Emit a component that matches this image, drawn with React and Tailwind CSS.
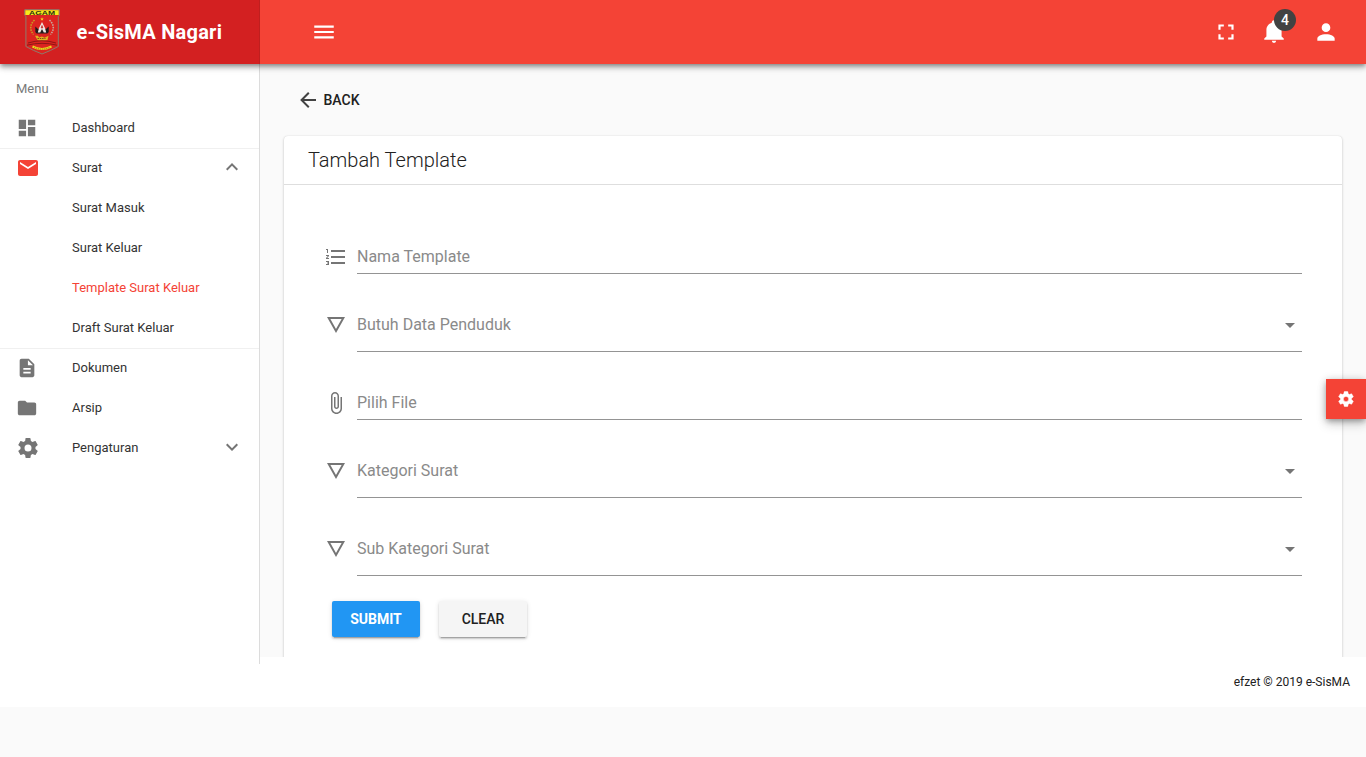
import React from "react";

const PATHS = {
  menu: "M3 6h18v2H3V6m0 5h18v2H3v-2m0 5h18v2H3v-2z",
  fullscreen: "M5 5h5v2H7v3H5V5m9 0h5v5h-2V7h-3V5m3 9h2v5h-5v-2h3v-3m-7 3v2H5v-5h2v3h3z",
  bell: "M21 19v1H3v-1l2-2v-6c0-3.1 2.03-5.83 5-6.71V4a2 2 0 0 1 4 0v.29c2.97.88 5 3.61 5 6.71v6l2 2m-7 2a2 2 0 0 1-4 0",
  person: "M12 4a4 4 0 1 1 0 8 4 4 0 0 1 0-8m0 10c4.42 0 8 1.79 8 4v2H4v-2c0-2.21 3.58-4 8-4z",
  dashboard: "M13 3v6h8V3h-8m0 18h8V11h-8v10M3 21h8v-6H3v6m0-8h8V3H3v10z",
  email: "M20 4H4c-1.1 0-1.99.9-1.99 2L2 18c0 1.1.9 2 2 2h16c1.1 0 2-.9 2-2V6c0-1.1-.9-2-2-2zm0 4l-8 5-8-5V6l8 5 8-5v2z",
  document: "M14 2H6c-1.1 0-1.99.9-1.99 2L4 20c0 1.1.89 2 1.99 2H18c1.1 0 2-.9 2-2V8l-6-6zm2 16H8v-2h8v2zm0-4H8v-2h8v2zm-3-5V3.5L18.5 9H13z",
  folder: "M10 4H4c-1.1 0-1.99.9-1.99 2L2 18c0 1.1.9 2 2 2h16c1.1 0 2-.9 2-2V8c0-1.1-.9-2-2-2h-8l-2-2z",
  settings: "M12 15.5A3.5 3.5 0 0 1 8.5 12 3.5 3.5 0 0 1 12 8.5a3.5 3.5 0 0 1 3.5 3.5 3.5 3.5 0 0 1-3.5 3.5m7.43-2.53c.04-.32.07-.64.07-.97 0-.33-.03-.66-.07-1l2.11-1.63c.19-.15.24-.42.12-.64l-2-3.46c-.12-.22-.39-.31-.61-.22l-2.49 1c-.52-.39-1.06-.73-1.69-.98l-.37-2.65A.506.506 0 0 0 14 2h-4c-.25 0-.46.18-.5.42l-.37 2.65c-.63.25-1.17.59-1.69.98l-2.49-1c-.22-.09-.49 0-.61.22l-2 3.46c-.13.22-.07.49.12.64L4.57 11c-.04.34-.07.67-.07 1 0 .33.03.65.07.97l-2.11 1.66c-.19.15-.25.42-.12.64l2 3.46c.12.22.39.3.61.22l2.49-1.01c.52.4 1.06.74 1.69.99l.37 2.65c.04.24.25.42.5.42h4c.25 0 .46-.18.5-.42l.37-2.65c.63-.26 1.17-.59 1.69-.99l2.49 1.01c.22.08.49 0 .61-.22l2-3.46c.12-.22.07-.49-.12-.64l-2.11-1.66z",
  up: "M7.41 15.41L12 10.83l4.59 4.58L18 14l-6-6-6 6z",
  down: "M7.41 8.59L12 13.17l4.59-4.58L18 10l-6 6-6-6z",
  back: "M20 11v2H8l5.5 5.5-1.42 1.42L4.16 12l7.92-7.92L13.5 5.5 8 11h12z",
  list: "M2 17h2v.5H3v1h1v.5H2v1h3v-4H2v1zm1-9h1V4H2v1h1v3zm-1 3h1.8L2 13.1v.9h3v-1H3.2L5 10.9V10H2v1zm5-6v2h14V5H7zm0 14h14v-2H7v2zm0-6h14v-2H7v2z",
  details: "M6.38 6h11.25L12 16 6.38 6M3 4l9 16 9-16H3z",
  clip: "M16.5 6v11.5c0 2.21-1.79 4-4 4s-4-1.79-4-4V5c0-1.38 1.12-2.5 2.5-2.5s2.5 1.12 2.5 2.5v10.5c0 .55-.45 1-1 1s-1-.45-1-1V6H10v9.5c0 1.38 1.12 2.5 2.5 2.5s2.5-1.12 2.5-2.5V5c0-2.21-1.79-4-4-4S7 2.79 7 5v12.5c0 3.04 2.46 5.5 5.5 5.5s5.5-2.46 5.5-5.5V6h-1.5z",
  caret: "M7 10l5 5 5-5H7z",
};

function Icon({ name, className = "size-6" }) {
  return (
    <svg viewBox="0 0 24 24" fill="currentColor" className={`shrink-0 ${className}`} aria-hidden="true">
      <path fillRule="evenodd" d={PATHS[name]} />
    </svg>
  );
}

function Logo() {
  return (
    <svg viewBox="0 0 36 46" className="h-[46px] w-9 shrink-0">
      <path d="M.7.7h34.6v5.6l-1 1v30.2Q27 41.5 18 45 9 41.5 1.9 37.5V7.3L.7 6.3z" fill="#dc2420" stroke="#8f7a6c" strokeWidth="1" />
      <path d="M1.3 1.2h33.4v4.9H1.3z" fill="#f4ea1c" />
      <text x="18" y="5.8" textAnchor="middle" textLength="26" lengthAdjust="spacingAndGlyphs" fontFamily="Liberation Sans, sans-serif" fontWeight="700" fontSize="6" fill="#2c2a12">AGAM</text>
      <path d="M10.500 11Q3.500 18 9.500 25.500" fill="none" stroke="#c99a22" strokeWidth="1.600" strokeDasharray="1.600 1" />
      <path d="M25.500 11Q32.500 18 26.500 25.500" fill="none" stroke="#c9a79c" strokeWidth="1.600" strokeDasharray="1.600 1" />
      <path d="M18 8.200l.5 1.200 1.300.1-1 .8.400 1.300-1.200-.7-1.200.7.400-1.300-1-.8 1.300-.1z" fill="#f0d020" />
      <path d="M11.300 17.500l2.700 2.500h8l2.700-2.500v5.500q-.7 1.500-2.200 1.500h-9q-1.500 0-2.200-1.500z" fill="#241c1c" />
      <path d="M18 13l3 6 1.200 4.500h-2.400L18 20l-1.800 3.500h-2.400L15 19z" fill="#f0e8e4" />
      <path d="M18 15.500l1.300 3-1.300 1.300-1.300-1.300z" fill="#c43c34" />
      <path d="M11 26.800h3l1 1.700 3-1 2.500 1.200 4-2-1 4.200q-6 1.600-10 0z" fill="#dfb31f" />
      <path d="M13.500 29.500h8" stroke="#7b3d18" strokeWidth=".9" strokeDasharray="1.500 .8" />
      <path d="M4 34q14-4.500 28 0M3 36.200q15-3.800 30 0" fill="none" stroke="#8e1714" strokeWidth="1" />
      <path d="M8.500 37.500Q18 42.500 27.500 37.500" fill="none" stroke="#f0d81e" strokeWidth="2" />
      <path d="M10 38.200Q18 42 26 38.200" fill="none" stroke="#8a5a14" strokeWidth=".7" strokeDasharray="1.200 .8" />
    </svg>
  );
}

function NavItem({ icon, iconClass = "size-6 text-[#757575]", label, chevron, divider, active }) {
  return (
    <a className={`flex h-10 items-center pr-4 pl-4 text-[13px] ${divider ? "border-t border-b border-t-[#f0f0f0] border-b-transparent" : ""} ${active ? "text-[#f44336]" : "text-[#333333]"}`}>
      <span className="flex w-14 shrink-0">{icon && <Icon name={icon} className={iconClass} />}</span>
      <span className="grow">{label}</span>
      {chevron && <Icon name={chevron} className="-mt-0.5 mr-[-1px] size-6 text-[#757575]" />}
    </a>
  );
}

function Field({ icon, label, select, className = "" }) {
  return (
    <div className={`flex ${className}`}>
      <Icon name={icon} className="mt-[5px] mr-[9px] size-6 text-[#757575]" />
      <div className={`flex grow items-start justify-between border-b border-[#949494] pt-[5px] ${select ? "h-11" : "h-[34px]"}`}>
        <span className="text-base leading-6 text-[#8a8a8a]">{label}</span>
        {select && <Icon name="caret" className="size-6 text-[#757575]" />}
      </div>
    </div>
  );
}

export default function App() {
  return (
    <div className="h-[757px] overflow-hidden bg-[#fafafa] font-[Roboto,sans-serif] text-[#212121]">
      <header className="relative z-20 flex h-16 bg-[#f44336] text-white shadow-[0_2px_4px_-1px_rgba(0,0,0,0.3),0_4px_5px_0_rgba(0,0,0,0.2),0_1px_10px_0_rgba(0,0,0,0.14)]">
        <div className="flex w-[260px] items-center border-r border-[#bf1f1f] bg-[#d32021] pl-6">
          <Logo />
          <h1 className="ml-[16.5px] text-xl leading-none font-bold tracking-[0.0125em] whitespace-nowrap">e-SisMA Nagari</h1>
        </div>
        <div className="flex grow items-center justify-between pr-[27px] pl-[51px]">
          <Icon name="menu" className="size-[26px]" />
          <div className="flex items-center gap-[22px]">
            <Icon name="fullscreen" className="size-[26px]" />
            <span className="relative">
              <Icon name="bell" className="size-[26px] -translate-y-px" />
              <span className="absolute -top-[10px] left-[13px] flex size-[22px] items-center justify-center rounded-full bg-[#424242] text-sm font-medium">4</span>
            </span>
            <span className="pl-1">
              <Icon name="person" className="size-[26px]" />
            </span>
          </div>
        </div>
      </header>

      <div className="flex h-[593px]">
        <aside className="relative z-10 h-[600px] w-[260px] shrink-0 border-r border-[#dcdcdc] bg-white">
          <div className="flex h-11 items-center pt-[5px] pl-4 text-[13px] text-[#7a7a7a]">Menu</div>
          <nav>
            <NavItem icon="dashboard" iconClass="size-[22px] text-[#757575]" label="Dashboard" />
            <NavItem icon="email" iconClass="size-6 text-[#f44336]" label="Surat" chevron="up" divider />
            <NavItem label="Surat Masuk" />
            <NavItem label="Surat Keluar" />
            <NavItem label="Template Surat Keluar" active />
            <NavItem label="Draft Surat Keluar" />
            <NavItem icon="document" iconClass="size-[22px] text-[#757575]" label="Dokumen" divider />
            <NavItem icon="folder" iconClass="size-[22px] text-[#757575]" label="Arsip" />
            <NavItem icon="settings" label="Pengaturan" chevron="down" />
          </nav>
        </aside>

        <main className="grow overflow-hidden px-6 pt-[18px]">
          <button className="flex h-9 items-center pl-3 text-sm font-medium">
            <Icon name="back" className="size-6 text-[#424242]" />
            <span className="ml-[3.5px]">BACK</span>
          </button>
          <section className="mt-[18px] h-[600px] rounded-t-sm bg-white shadow-[0_1px_3px_0_rgba(0,0,0,0.2),0_0_1px_0_rgba(0,0,0,0.14)]">
            <h2 className="flex h-[49px] items-center border-b border-[#dedede] pl-6 text-xl font-light">Tambah Template</h2>
            <form className="flex flex-col pt-[55px] pr-10 pl-10">
              <Field icon="list" label="Nama Template" />
              <Field icon="details" label="Butuh Data Penduduk" select className="mt-[34px]" />
              <Field icon="clip" label="Pilih File" className="mt-[34px]" />
              <Field icon="details" label="Kategori Surat" select className="mt-[34px]" />
              <Field icon="details" label="Sub Kategori Surat" select className="mt-[34px]" />
              <div className="mt-[25px] ml-2 flex gap-[19px]">
                <button type="button" className="h-9 w-[88px] rounded-xs bg-[#2196f3] text-sm font-bold text-white shadow-[0_3px_1px_-2px_rgba(0,0,0,0.2),0_2px_2px_0_rgba(0,0,0,0.14),0_1px_5px_0_rgba(0,0,0,0.12)]">SUBMIT</button>
                <button type="button" className="h-9 w-[88px] rounded-xs bg-[#f5f5f5] text-sm font-medium shadow-[0_3px_1px_-2px_rgba(0,0,0,0.2),0_2px_2px_0_rgba(0,0,0,0.14),0_1px_5px_0_rgba(0,0,0,0.12)]">CLEAR</button>
              </div>
            </form>
          </section>
        </main>
      </div>

      <footer className="flex h-[50px] items-center justify-end bg-white pr-4 text-xs">efzet © 2019 e-SisMA</footer>

      <button className="absolute top-[379px] right-0 z-30 flex size-10 items-center justify-center bg-[#f44336] text-white shadow-[0_3px_5px_-1px_rgba(0,0,0,0.2),0_6px_10px_0_rgba(0,0,0,0.14),0_1px_8px_0_rgba(0,0,0,0.22)]">
        <Icon name="settings" className="size-[18px] stroke-current stroke-[0.6]" />
      </button>
    </div>
  );
}
